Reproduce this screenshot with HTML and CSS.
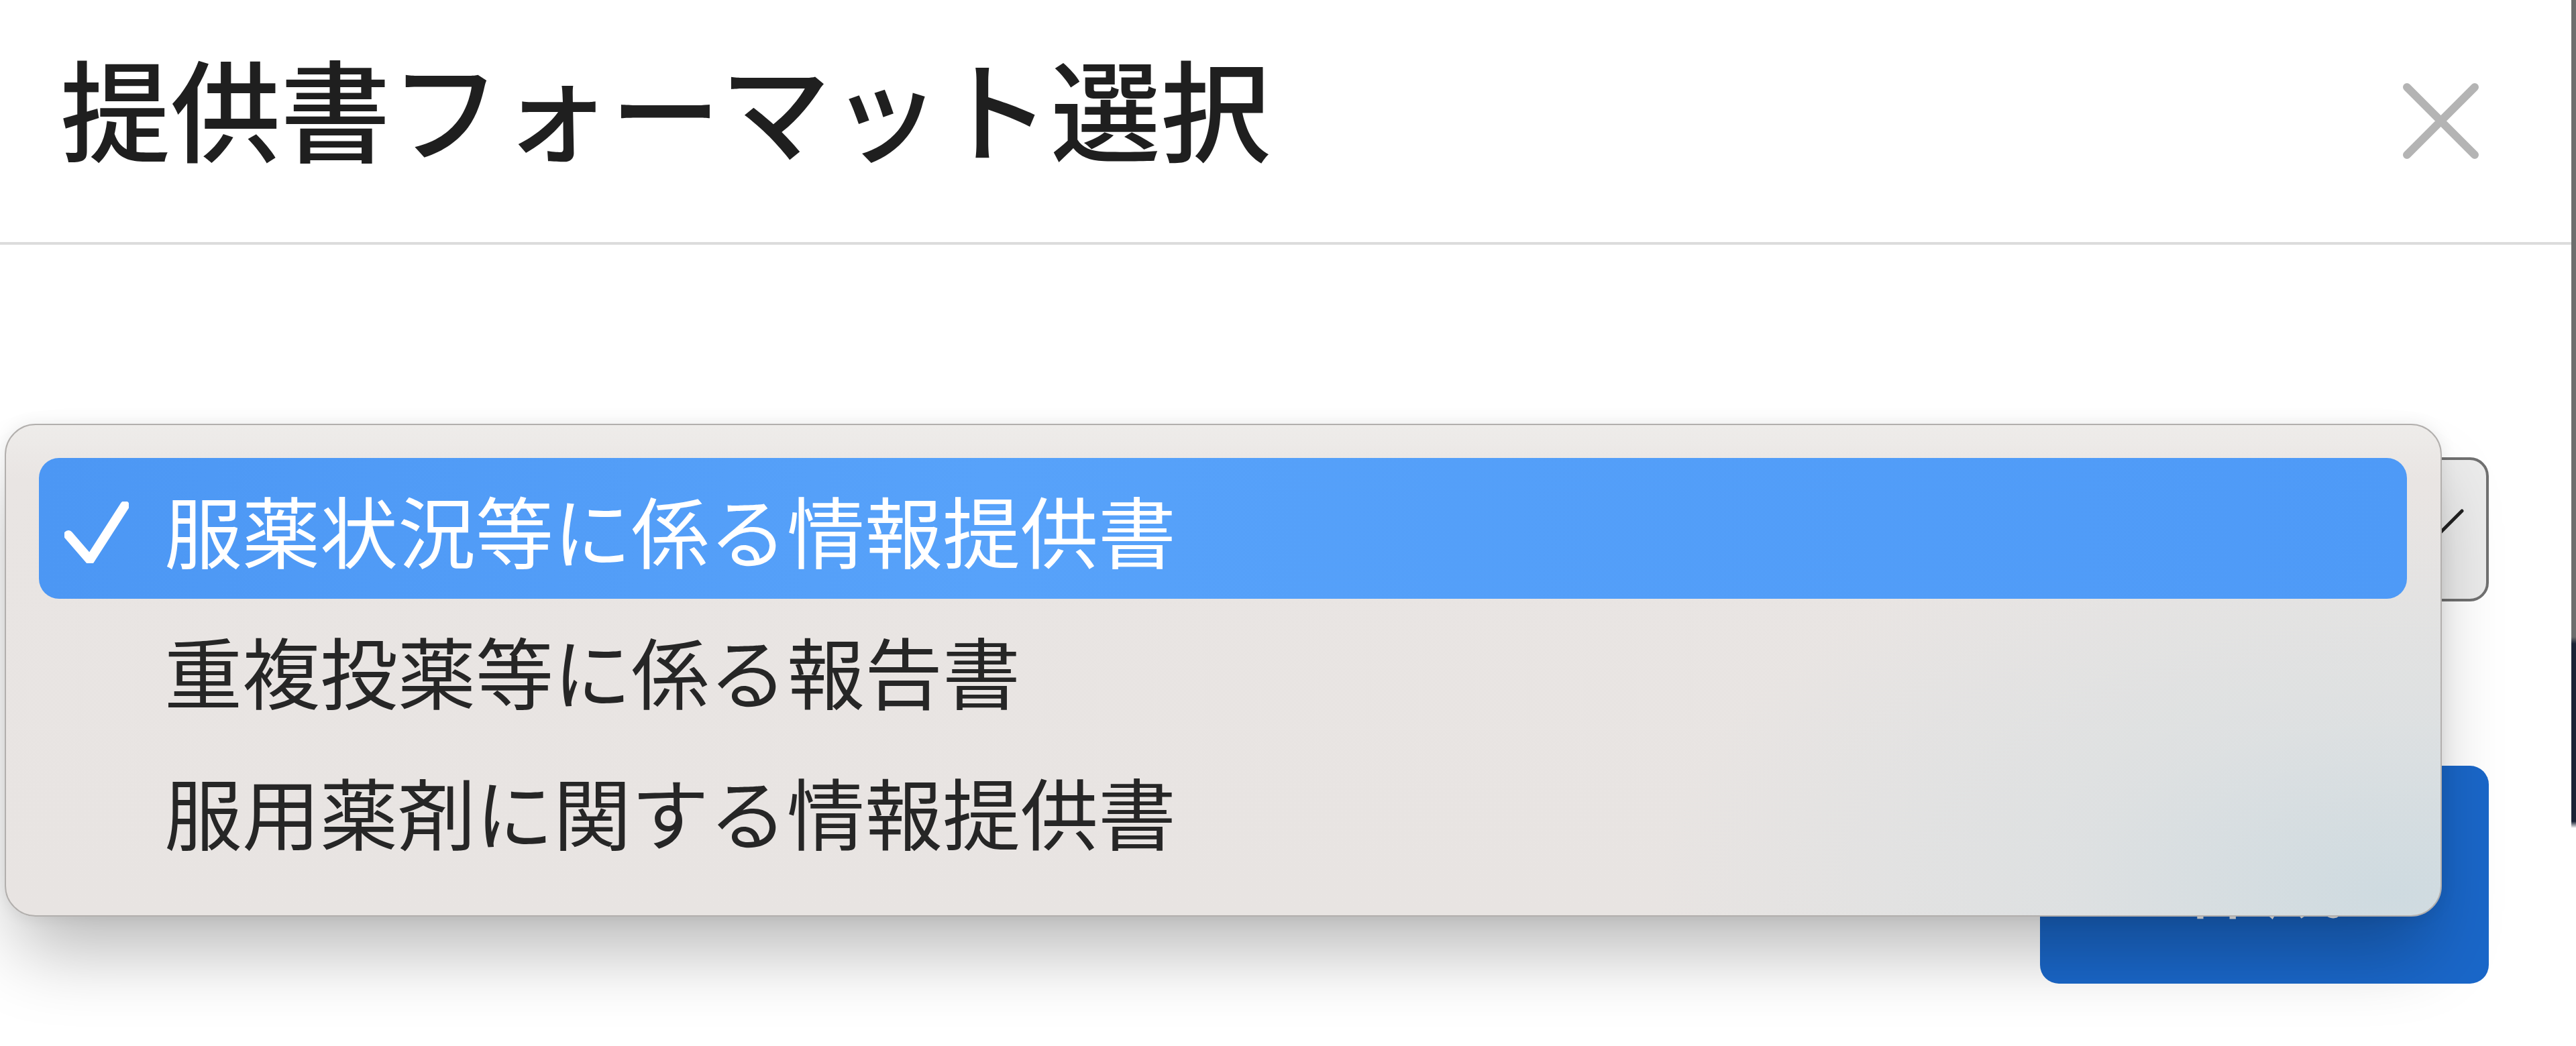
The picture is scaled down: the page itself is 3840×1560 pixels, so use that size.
FILE: index.html
```html
<!DOCTYPE html>
<html lang="ja">
<head>
<meta charset="utf-8">
<title>提供書フォーマット選択</title>
<link rel="stylesheet" href="styles.css">
</head>
<body>
  <div class="modal">
    <header class="modal-header">
      <h1 class="modal-title">提供書フォーマット選択</h1>
      <button class="close-btn" aria-label="閉じる">
        <svg width="117" height="117" viewBox="0 0 117 117"><path d="M8 8 L109 109 M109 8 L8 109" stroke="#b4b4b4" stroke-width="12" stroke-linecap="round" fill="none"/></svg>
      </button>
    </header>
    <div class="modal-body">
      <div class="select">
        <span class="select-value">服薬状況等に係る情報提供書</span>
        <svg class="chevron" width="80" height="44" viewBox="0 0 80 44"><path d="M4 4 L40 40 L76 4" stroke="#222" stroke-width="5" fill="none" stroke-linecap="round" stroke-linejoin="round"/></svg>
      </div>
      <div class="actions">
        <button class="primary-btn">作成</button>
      </div>
    </div>
    <div class="menu" role="listbox">
      <div class="option selected" role="option">
        <span class="mark">
          <svg width="96" height="92" viewBox="0 0 96 92"><path d="M6 50 L38 87 L90 6" stroke="#fff" stroke-width="14" fill="none" stroke-linecap="round" stroke-linejoin="round"/></svg>
        </span>
        <span class="label">服薬状況等に係る情報提供書</span>
      </div>
      <div class="option" role="option">
        <span class="mark"></span>
        <span class="label">重複投薬等に係る報告書</span>
      </div>
      <div class="option" role="option">
        <span class="mark"></span>
        <span class="label">服用薬剤に関する情報提供書</span>
      </div>
    </div>
  </div>
  <div class="edge"></div>
</body>
</html>
```
FILE: styles.css
```css
html, body {
  margin: 0;
  padding: 0;
}

body {
  width: 3840px;
  height: 1560px;
  overflow: hidden;
  display: flex;
  background: #ffffff;
  font-family: "Noto Sans CJK JP", "Noto Sans", sans-serif;
}

.modal {
  flex: 1;
  position: relative;
  background: #ffffff;
  display: flex;
  flex-direction: column;
}

.edge {
  width: 7px;
  flex: none;
  background: linear-gradient(to bottom, #6e6e6e 0, #6e6e6e 950px, #1b2336 960px, #1b2336 1225px, #ffffff 1235px);
}

.modal-header {
  height: 365px;
  box-sizing: border-box;
  display: flex;
  justify-content: space-between;
  align-items: flex-start;
  padding: 76px 136px 0 90px;
  border-bottom: 4px solid #dcdcdc;
}

.modal-title {
  margin: 0;
  font-size: 164px;
  line-height: 164px;
  font-weight: 500;
  color: #1f1f1f;
}

.close-btn {
  margin-top: 46px;
  padding: 0;
  border: none;
  background: transparent;
  line-height: 0;
}

.modal-body {
  display: flex;
  flex-direction: column;
  padding: 317px 123px 0 90px;
}

.select {
  height: 215px;
  box-sizing: border-box;
  border: 4px solid #707070;
  border-radius: 28px;
  background: #ebebeb;
  display: flex;
  align-items: center;
  justify-content: space-between;
  padding: 0 32px 0 150px;
  font-size: 116px;
  color: #222;
}

.chevron {
  margin-top: -20px;
}

.actions {
  display: flex;
  justify-content: flex-end;
  margin-top: 245px;
}

.primary-btn {
  width: 669px;
  height: 325px;
  border: none;
  border-radius: 28px;
  background: #1a67c9;
  color: #ffffff;
  font-family: inherit;
  font-size: 122px;
  padding: 4px 0 0 0;
}

.menu {
  position: absolute;
  left: 7px;
  top: 632px;
  width: 3633px;
  box-sizing: border-box;
  padding: 49px 50px 52px 49px;
  border: 2px solid #b2afad;
  border-radius: 46px;
  background:
    radial-gradient(ellipse 1100px 600px at 3560px 700px, rgba(205, 218, 224, 0.95) 0%, rgba(215, 222, 225, 0.6) 45%, rgba(233, 229, 227, 0) 100%),
    linear-gradient(to bottom, #eeecea 0, #e9e5e3 80px, #e8e4e2 100%);
  box-shadow: 0 70px 110px -20px rgba(0, 0, 0, 0.28), 0 0 24px rgba(0, 0, 0, 0.08);
}

.option {
  height: 210px;
  display: flex;
  align-items: center;
  border-radius: 30px;
  font-size: 116px;
  color: #262626;
}

.option.selected {
  background: linear-gradient(90deg, #4c97f4 0%, #57a2fa 40%, #4e9af7 100%);
  color: #ffffff;
}

.mark {
  width: 187px;
  flex: none;
  box-sizing: border-box;
  padding-left: 38px;
  display: flex;
  align-items: center;
  line-height: 0;
  margin-top: 12px;
}

.label {
  white-space: nowrap;
}
```
